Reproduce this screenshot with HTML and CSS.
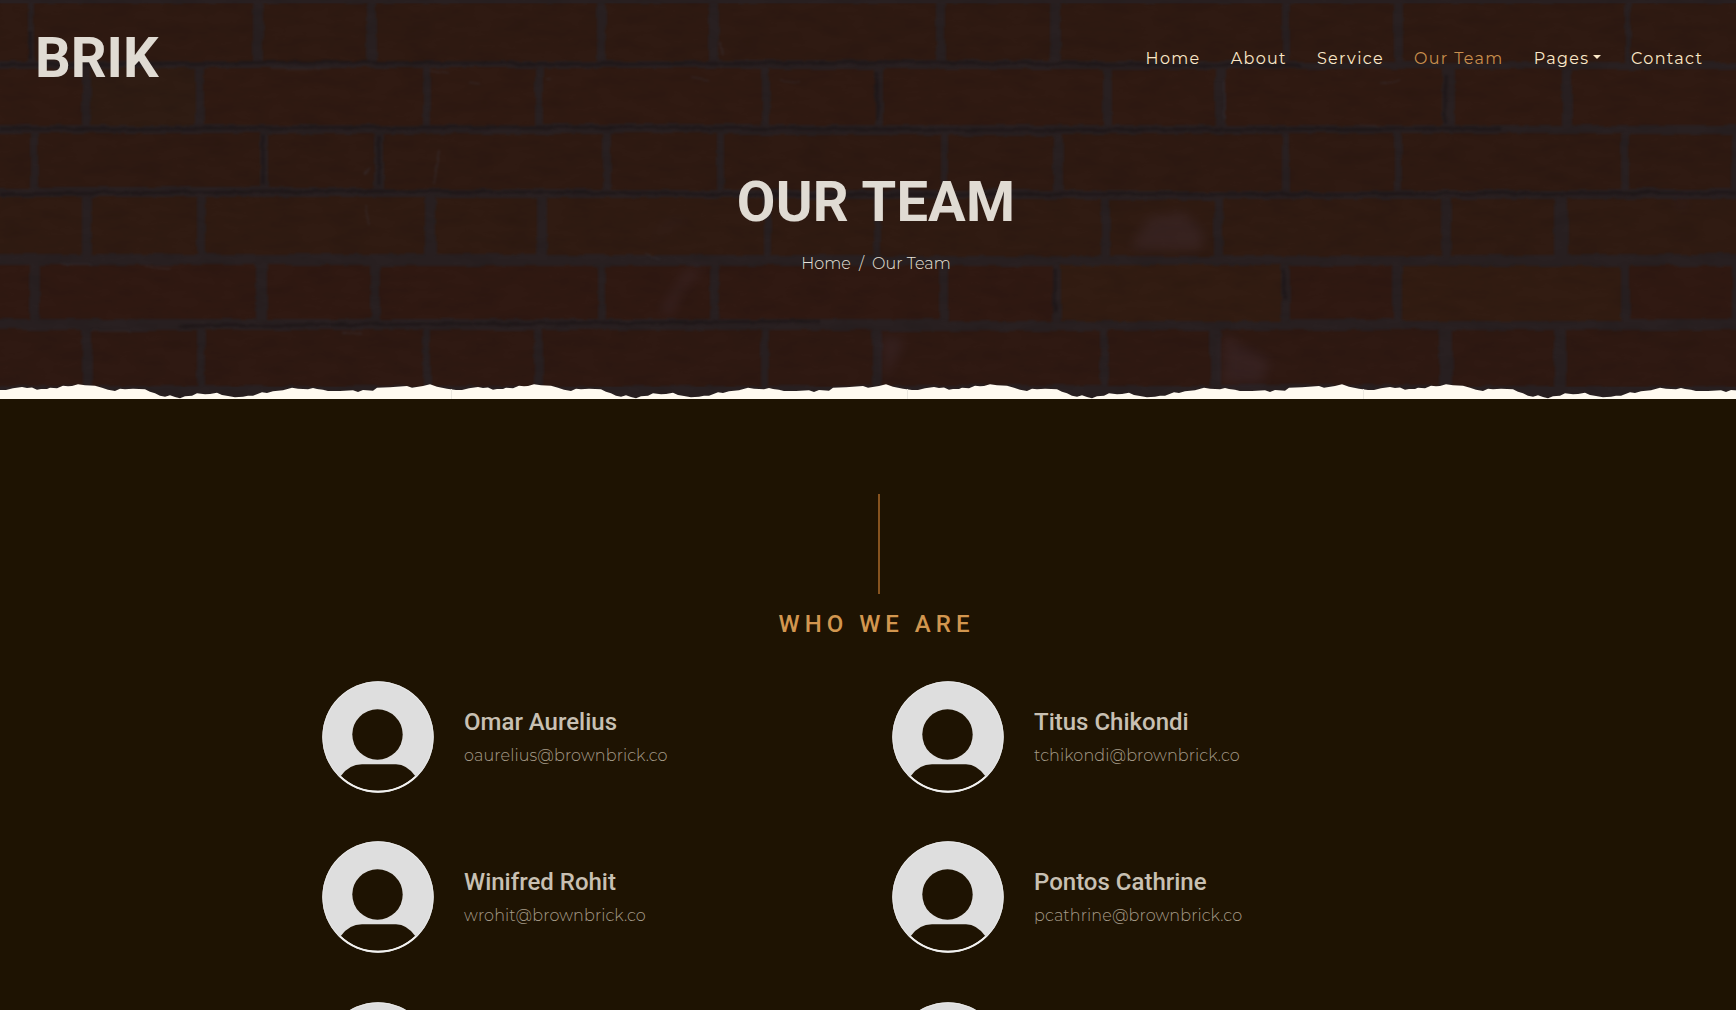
FILE: index.html
```html
<!DOCTYPE html>
<html lang="en">
<head>
<meta charset="utf-8">
<title>Our Team</title>
<link rel="stylesheet" href="styles.css">
</head>
<body>
<svg class="defs" width="0" height="0" aria-hidden="true">
  <symbol id="avatar" viewBox="0 0 112 112">
    <circle cx="56" cy="56" r="55.700" fill="#dedede"/>
    <circle cx="56" cy="56" r="55.300" fill="none" stroke="#ebebeb" stroke-width=".8"/>
    <circle cx="55.500" cy="53.500" r="25.200" fill="#1e1302"/>
    <path d="M18.800 95Q27 83.200 40 83.200H74Q85 83.400 93.200 95A54 54 0 0 1 18.800 95Z" fill="#1e1302"/>
    <path d="M18.500 95.500A54.500 54.500 0 0 0 93.500 95.500" fill="none" stroke="#f4f3f1" stroke-width="1.400"/>
  </symbol>
</svg>
<header class="hero">
  <svg class="wall" viewBox="0 0 1736 399" preserveAspectRatio="none" aria-hidden="true">
    <defs>
      <filter id="rough" x="0" y="0" width="100%" height="100%" color-interpolation-filters="sRGB">
        <feTurbulence type="fractalNoise" baseFrequency="0.05" numOctaves="3" seed="4" result="n"/>
        <feDisplacementMap in="SourceGraphic" in2="n" scale="5" xChannelSelector="R" yChannelSelector="G"/>
        <feGaussianBlur stdDeviation="0.8"/>
      </filter>
      <filter id="grain" x="0" y="0" width="100%" height="100%" color-interpolation-filters="sRGB">
        <feTurbulence type="fractalNoise" baseFrequency="0.03 0.08" numOctaves="5" seed="9"/>
        <feColorMatrix values="0 0 0 0 0  0 0 0 0 0  0 0 0 0 0  0 0 0 1.2 -0.45"/>
      </filter>
      <filter id="soft" x="-30%" y="-30%" width="160%" height="160%" color-interpolation-filters="sRGB"><feGaussianBlur stdDeviation="6"/></filter>
      <pattern id="torn" x="0" y="0" width="456" height="15" patternUnits="userSpaceOnUse">
        <path fill="#fffaf0" d="M0 6L6 6L13 4.300L22 3L27 4L32 3.600L37 5.700L41 5L47 5L50 3.700L57 4.300L63 1.700L68 2.300L72 2L78 .300L85 1.300L95 1.700L102 3.700L108 5.700L115 7L120 4.700L125 5.300L133 4.700L145 5.300L150 7.700L155 9.300L160 11.700L165 12.700L170 11.300L175 13L180 14.300L185 12.300L192 11.700L197 9.300L205 10.300L210 10L217 8.700L222 11L228 12L235 13.300L243 12.700L248 11.700L253 11.700L262 8.300L267 9L273 7.300L283 6.300L292 3.700L298 4.700L308 5.300L313 4L317 5L323 5.700L328 7L340 7L353 6.300L358 8L363 6L373 6.700L377 3.700L390 3.300L407 2L412 3.700L423 2L430 .300L437 2.700L447 4.700L456 6V15H0Z"/>
        <path fill="#ece8df" d="M451 5h1v10h-1z"/>
      </pattern>
    </defs>
    <rect width="1736" height="399" fill="#292021"/>
    <g filter="url(#rough)">
      <path fill="#2f1a12" d="M-5 3H28V61H-5zM34 3H253V61H34zM263 3H367V61H263zM377 3H597V61H377zM606 3H709V61H606zM719 3H936V60H719zM945 3H1050V60H945zM1061 3H1282V61H1061zM1290 3H1394V62H1290zM1403 3H1625V62H1403zM1631 3H1745V62H1631z"/>
      <path fill="#301a12" d="M-5 69H82V125H-5zM204 68H423V125H204zM430 68H535V125H430zM543 68H762V124H543zM770 69H875V125H770zM883 69H1103V125H883zM1112 69H1215V125H1112zM1226 69H1442V125H1226zM1455 69H1562V125H1455zM1572 69H1745V125H1572z"/>
      <path fill="#2f1a12" d="M-5 134H30V188H-5zM38 133H260V187H38zM268 134H374V188H268zM384 134H603V189H384zM611 133H717V190H611zM724 135H941V190H724zM948 136H1053V190H948zM1063 134H1282V191H1063zM1289 133H1394V191H1289zM1402 133H1621V190H1402zM1629 134H1732V189H1629z"/>
      <path fill="#301b12" d="M-5 197H82V254H-5zM92 197H197V254H92zM205 197H425V254H205zM436 198H537V254H436zM547 198H764V255H547zM771 199H874V255H771zM881 199H1101V256H881zM1110 200H1214V256H1110zM1223 199H1441V256H1223zM1451 199H1554V255H1451zM1568 199H1745V254H1568z"/>
      <path fill="#301912" d="M-5 265H30V319H-5zM40 265H256V319H40zM267 265H370V319H267zM380 266H598V319H380zM606 266H711V319H606zM719 266H939V319H719zM949 266H1053V321H949zM1290 266H1392V319H1290zM1630 266H1732V319H1630z"/>
      <path fill="#2f1912" d="M-5 330H82V386H-5zM92 331H197V386H92zM205 330H423V386H205zM431 330H534V386H431zM543 330H761V386H543zM769 330H872V386H769zM882 331H1100V385H882zM1108 330H1210V386H1108zM1221 330H1439V385H1221zM1453 330H1554V386H1453zM1566 330H1745V387H1566z"/>
      <path fill="#2f1c13" d="M91 68H195V125H91z"/>
      <path fill="#321c12" d="M1061 265H1281V321H1061zM1402 266H1621V321H1402z"/>
      <path fill="none" stroke="#1b1415" stroke-width="3" opacity=".6" d="M0 65L300 62L600 64L900 62L1300 66M0 194L400 191L800 195L1200 194L1736 193M0 129L500 127L1000 130L1500 128M180 326L450 324L820 321M1445 76V123M1284 270V300M1055 270V312M877 72V120M30 30V58M263 135V185M379 136V185"/>
      <path fill="none" stroke="#3b3339" stroke-width="1.200" opacity=".6" d="M60 264H90M145 266L170 268M470 82L480 84M545 80H550M430 70L450 73M92 331H130M342 332L362 334M440 150L434 185M363 174L370 168M366 205L370 225M690 77L710 80M645 253L660 260M780 80L800 82M720 42L724 55M1380 83L1400 80M270 68H330M1380 125L1360 124M1225 80V120"/>
    </g>
    <rect width="1736" height="399" filter="url(#grain)" opacity=".12"/>
    <g filter="url(#soft)" fill="#46323c" opacity=".32">
      <path d="M1135 240L1150 217L1185 212L1205 235L1200 250L1130 250z"/>
      <path d="M645 252L665 223L695 217L665 228zM660 312L685 272L707 265L680 292L672 316z"/>
      <path d="M1224 333L1240 345L1270 360L1262 384H1222zM882 335L905 340L890 370L885 380z"/>
      <path d="M1676 200L1688 198L1680 212z"/>
    </g>
    <g transform="translate(0 384)"><rect width="1736" height="15" fill="url(#torn)"/></g>
  </svg>
  <div class="topbar">
    <a class="brand">BRIK</a>
    <nav class="nav">
      <a>Home</a><a>About</a><a>Service</a><a class="active">Our Team</a><a class="toggle">Pages</a><a>Contact</a>
    </nav>
  </div>
  <div class="heading">
    <h1>OUR TEAM</h1>
    <p class="crumbs"><span>Home</span><span>/</span><span>Our Team</span></p>
  </div>
</header>
<main class="team">
  <div class="rule"></div>
  <h2>WHO WE ARE</h2>
  <div class="grid">
    <article class="member"><svg class="avatar"><use href="#avatar"/></svg><div class="info"><h3>Omar Aurelius</h3><p>oaurelius@brownbrick.co</p></div></article>
    <article class="member"><svg class="avatar"><use href="#avatar"/></svg><div class="info"><h3>Titus Chikondi</h3><p>tchikondi@brownbrick.co</p></div></article>
    <article class="member"><svg class="avatar"><use href="#avatar"/></svg><div class="info"><h3>Winifred Rohit</h3><p>wrohit@brownbrick.co</p></div></article>
    <article class="member"><svg class="avatar"><use href="#avatar"/></svg><div class="info"><h3>Pontos Cathrine</h3><p>pcathrine@brownbrick.co</p></div></article>
    <article class="member"><svg class="avatar"><use href="#avatar"/></svg></article>
    <article class="member"><svg class="avatar"><use href="#avatar"/></svg></article>
  </div>
</main>
</body>
</html>
```
FILE: styles.css
```css
* { box-sizing: border-box; }
html { overflow: hidden; }
body {
  margin: 0;
  height: 1010px;
  overflow: hidden;
  background: #1e1302;
  font-family: Montserrat, Inter, sans-serif;
  font-size: 16px;
  font-weight: 300;
}
h1, h2, h3, p { margin: 0; font-family: Roboto, sans-serif; }
.defs { display: block; }
.hero { position: relative; height: 399px; }
.wall { position: absolute; inset: 0; width: 100%; height: 399px; }
.topbar {
  position: relative;
  display: flex;
  justify-content: space-between;
  align-items: center;
  height: 115px;
  padding: 0 32.6px 0 35px;
}
.brand { font: 700 56px/64px Roboto, sans-serif; color: #e0dbd3; }
.nav { display: flex; gap: 30px; padding-top: 2px; font-weight: 400; letter-spacing: 1.34px; color: #fbe8c8; line-height: 24px; }
.nav .active { color: #c98f4d; }
.toggle { display: flex; align-items: center; gap: 3.5px; }
.toggle::after { content: ""; margin-top: -3px; border: 4.8px solid transparent; border-top-color: currentColor; border-bottom: 0; }
.heading { position: relative; margin-left: 16px; padding-top: 54px; text-align: center; }
h1 { font-size: 56px; font-weight: 700; line-height: 67px; letter-spacing: .2px; color: #e0dbd3; }
.crumbs { display: flex; justify-content: center; gap: 8px; margin-top: 16px; font-family: Montserrat, Inter, sans-serif; letter-spacing: .05px; line-height: 24px; color: #e8e3da; }
.team { height: 611px; overflow: hidden; margin-left: 16px; padding-top: 95px; display: flex; flex-direction: column; align-items: center; }
.rule { flex: none; width: 2px; height: 100px; margin-left: 6px; background: #86531f; }
h2 { margin-top: 16px; padding-left: 1px; font-size: 24px; font-weight: 500; line-height: 29px; letter-spacing: 5px; color: #d2964f; }
.grid { width: 1140px; margin-top: 42px; display: grid; grid-template-columns: 1fr 1fr; row-gap: 48.3px; }
.member { display: flex; align-items: center; gap: 30px; padding-left: 16px; }
.avatar { width: 112px; height: 112px; }
.info { padding-top: 2px; }
h3 { font-size: 24px; font-weight: 500; line-height: 29px; color: #c8c0b3; }
.member p { margin-top: 7px; font-family: Montserrat, Inter, sans-serif; font-weight: 300; letter-spacing: .12px; line-height: 24px; color: #a79d8a; }
```
